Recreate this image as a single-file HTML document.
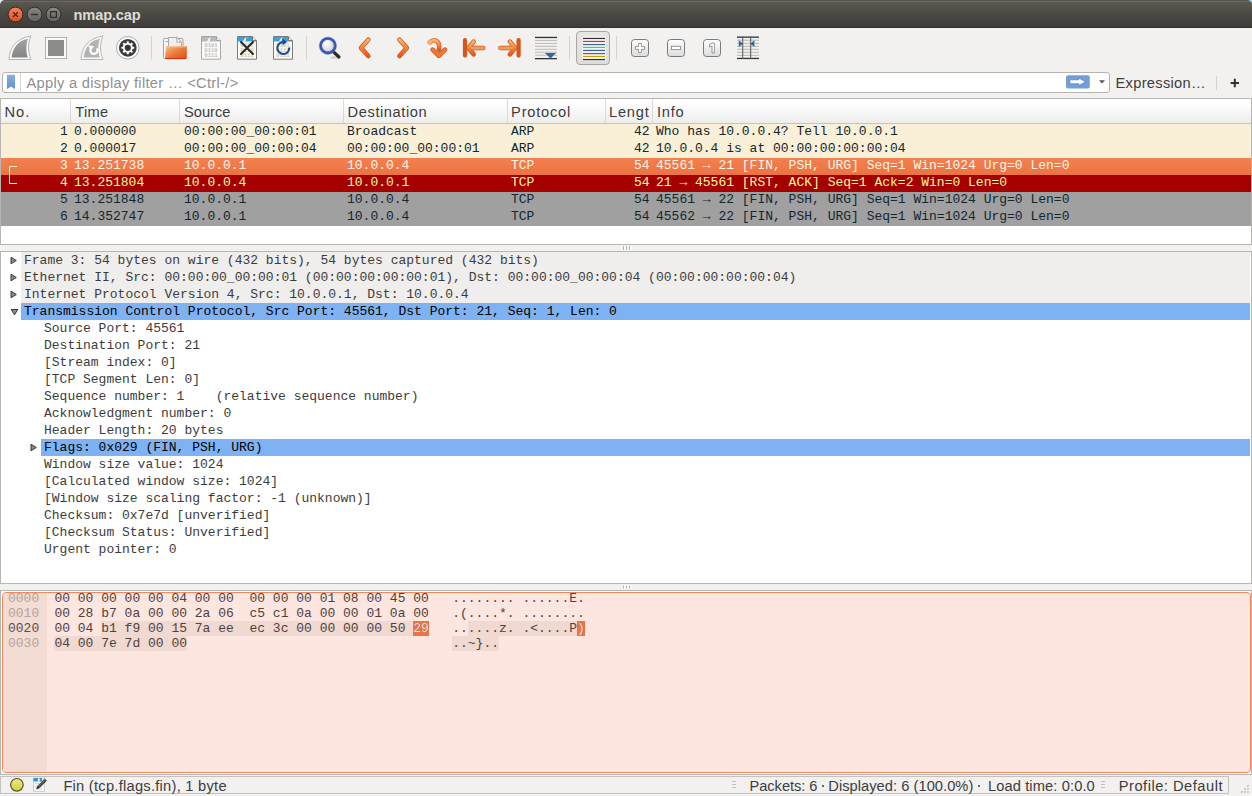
<!DOCTYPE html>
<html><head><meta charset="utf-8"><style>
*{box-sizing:border-box;margin:0;padding:0}
html,body{width:1252px;height:796px;overflow:hidden;background:#f2f1f0;font-family:"Liberation Sans",sans-serif;position:relative}
.abs{position:absolute}
.ui{position:absolute;font-family:"Liberation Sans",sans-serif;font-size:14.7px;color:#3c3c3c;white-space:pre;line-height:17px}
.m{font-family:"Liberation Mono",monospace;font-size:13px;white-space:pre;position:absolute;line-height:17px}
</style></head><body>
<div class="abs" style="left:0;top:0;width:6px;height:6px;background:linear-gradient(135deg,#e8f0f8 0,#e8f0f8 30%,#3a64a8 60%)"></div>
<div class="abs" style="left:1246px;top:0;width:6px;height:6px;background:linear-gradient(225deg,#b0d0f0 0,#90c0e8 30%,#e89030 60%)"></div>
<div class="abs" style="left:0;top:0;width:1252px;height:28px;border-radius:5px 5px 0 0;background:linear-gradient(#57554e 0px,#57554e 1px,#6a675e 1px,#6a675e 2px,#5a5750 2px,#4b4944 14px,#3d3c38 27px);border-bottom:1px solid #33322e"></div>
<div class="ui" style="left:73.60px;top:7px;font-size:14.6px;letter-spacing:-0.158px;font-weight:bold;color:#dfdbd2">nmap.cap</div>
<svg class="abs" style="left:0;top:0" width="70" height="28">
<defs>
<linearGradient id="gc" x1="0" y1="0" x2="0" y2="1"><stop offset="0" stop-color="#f5845a"/><stop offset="1" stop-color="#e14e1c"/></linearGradient>
<linearGradient id="gg" x1="0" y1="0" x2="0" y2="1"><stop offset="0" stop-color="#8a8884"/><stop offset="1" stop-color="#62605b"/></linearGradient>
</defs>
<circle cx="15.5" cy="14.5" r="7.4" fill="url(#gc)" stroke="#2f2d29" stroke-width="1"/>
<path d="M13.1 12.1 L17.9 16.9 M17.9 12.1 L13.1 16.9" stroke="#2b2520" stroke-width="1.3"/>
<circle cx="34.5" cy="14.5" r="7.4" fill="url(#gg)" stroke="#2f2d29" stroke-width="1"/>
<path d="M31 14.5 H38" stroke="#2e2d2a" stroke-width="1.4"/>
<circle cx="53.5" cy="14.5" r="7.4" fill="url(#gg)" stroke="#2f2d29" stroke-width="1"/>
<rect x="50.6" y="11.6" width="5.8" height="5.8" fill="none" stroke="#2e2d2a" stroke-width="1.2"/>
</svg>
<svg class="abs" style="left:0;top:28px" width="780" height="42" viewBox="0 28 780 42">
<defs>
<linearGradient id="fin" x1="0" y1="0" x2="0" y2="1"><stop offset="0" stop-color="#a3a3a3"/><stop offset="1" stop-color="#858585"/></linearGradient>
<linearGradient id="org" x1="0" y1="0" x2="0" y2="1"><stop offset="0" stop-color="#f5b56e"/><stop offset="1" stop-color="#e9571c"/></linearGradient>
<linearGradient id="fold" x1="0" y1="0" x2="1" y2="1"><stop offset="0" stop-color="#f6c38a"/><stop offset="0.5" stop-color="#ec7a3a"/><stop offset="1" stop-color="#e04a10"/></linearGradient>
<linearGradient id="btn" x1="0" y1="0" x2="0" y2="1"><stop offset="0" stop-color="#ffffff"/><stop offset="1" stop-color="#dcdcdc"/></linearGradient>
<linearGradient id="pbtn" x1="0" y1="0" x2="0" y2="1"><stop offset="0" stop-color="#e9e7e5"/><stop offset="1" stop-color="#dfdddb"/></linearGradient>
<radialGradient id="lens" cx="0.4" cy="0.35" r="0.7"><stop offset="0" stop-color="#ffffff"/><stop offset="1" stop-color="#c8c8c8"/></radialGradient>
</defs>
<!-- shark fin start -->
<path d="M9 59.5 C9.5 48 16 38 31 36 C28 42 27.5 51 31 59.5 Z" fill="#fafafa" stroke="#b4b4b4" stroke-width="1"/>
<path d="M11.6 57.6 C12.5 48 18 40.5 27.8 38.7 C26 44 25.8 52 27.8 57.6 Z" fill="url(#fin)"/>
<!-- stop -->
<rect x="45.5" y="37.5" width="21" height="21" fill="#fafafa" stroke="#b4b4b4" stroke-width="1"/>
<rect x="48" y="40" width="16" height="16" fill="#8c8c8a"/>
<!-- restart fin -->
<path d="M81 59.5 C81.5 48 88 38 103 36 C100 42 99.5 51 103 59.5 Z" fill="#fafafa" stroke="#b4b4b4" stroke-width="1"/>
<path d="M83.6 57.6 C84.5 48 90 40.5 99.8 38.7 C98 44 97.8 52 99.8 57.6 Z" fill="#b3b3b3"/>
<path d="M90.6 49 A3.6 3.6 0 1 0 96.9 48.3" fill="none" stroke="#fff" stroke-width="2.2"/>
<path d="M88 45.3 L94 46.2 L90.6 51 Z" fill="#fff"/>
<!-- gear -->
<circle cx="127.8" cy="47.8" r="11.3" fill="#fff" stroke="#a8a8a8" stroke-width="1"/>
<circle cx="127.8" cy="47.8" r="8.9" fill="#3c3c3c"/>
<path d="M126.79 42.90 L126.83 41.37 L128.77 41.37 L128.81 42.90 L130.55 43.62 L131.66 42.57 L133.03 43.94 L131.98 45.05 L132.70 46.79 L134.23 46.83 L134.23 48.77 L132.70 48.81 L131.98 50.55 L133.03 51.66 L131.66 53.03 L130.55 51.98 L128.81 52.70 L128.77 54.23 L126.83 54.23 L126.79 52.70 L125.05 51.98 L123.94 53.03 L122.57 51.66 L123.62 50.55 L122.90 48.81 L121.37 48.77 L121.37 46.83 L122.90 46.79 L123.62 45.05 L122.57 43.94 L123.94 42.57 L125.05 43.62 Z" fill="#fff"/>
<circle cx="127.8" cy="47.8" r="3.1" fill="#353535"/>
<!-- separators -->
<rect x="151" y="36" width="1" height="23.5" fill="#d5d3d0"/>
<rect x="306" y="36" width="1" height="23.5" fill="#d5d3d0"/>
<rect x="569" y="36" width="1" height="23.5" fill="#d5d3d0"/>
<rect x="616" y="36" width="1" height="23.5" fill="#d5d3d0"/>
<!-- open folder -->
<rect x="163.5" y="38.5" width="19.5" height="20" rx="1" fill="#f6f6f6" stroke="#a4a4a4" stroke-width="1"/>
<rect x="165.5" y="41" width="3" height="1" fill="#e8a040"/>
<path d="M168.5 58 V37.5 H176.8 L181.5 42.2 V58 Z" fill="#efefef" stroke="#a8a8a8" stroke-width="1"/>
<path d="M176.8 37.5 V42.2 H181.5 Z" fill="#ffffff" stroke="#a8a8a8" stroke-width="1" stroke-linejoin="round"/>
<path d="M166 46 H186.8 V58 Q186.8 59 185.8 59 H165 Z" fill="url(#fold)"/>
<path d="M166.6 46.8 H186" stroke="#f8d8b0" stroke-width="0.8"/>
<path d="M165 58.6 H186" stroke="#c83008" stroke-width="1"/>
<!-- document (save) -->
<path d="M201.5 59.2 V36.5 H216.5 L220.5 40.5 V59.2 Z" fill="#fbfbfb" stroke="#a6a6a6" stroke-width="1"/>
<path d="M202 37 H216.3 L220 40.7 V41.5 H202 Z" fill="#b8b8b8"/>
<path d="M207 41.5 Q208 38 210.5 37 L209.5 41.5 Z" fill="#fbfbfb"/>
<path d="M216.5 36.5 V40.5 H220.5" fill="#eee" stroke="#a6a6a6" stroke-width="1"/>
<g opacity="0.99"><text x="211" y="47" font-family="Liberation Mono" font-size="5.6" font-weight="bold" fill="#bdbdbd" text-anchor="middle">0101</text>
<text x="211" y="52" font-family="Liberation Mono" font-size="5.6" font-weight="bold" fill="#bdbdbd" text-anchor="middle">0110</text>
<text x="211" y="57" font-family="Liberation Mono" font-size="5.6" font-weight="bold" fill="#bdbdbd" text-anchor="middle">0111</text></g>
<!-- close file -->
<path d="M237.5 59.2 V36.5 H252.5 L256.5 40.5 V59.2 Z" fill="#fbfbef" stroke="#7a7a7a" stroke-width="1"/>
<path d="M238 37 H252.3 L256 40.7 V41.5 H238 Z" fill="#3aa0e2"/>
<path d="M243 41.5 Q244 38 246.5 37 L245.5 41.5 Z" fill="#fbfbef"/>
<path d="M252.5 36.5 V40.5 H256.5" fill="#f2f2f2" stroke="#7a7a7a" stroke-width="1"/>
<text x="247" y="57" font-family="Liberation Mono" font-size="5.6" font-weight="bold" fill="#c8c8b8" text-anchor="middle">0111</text>
<text x="247" y="47" font-family="Liberation Mono" font-size="5.6" font-weight="bold" fill="#c8c8b8" text-anchor="middle">0101</text>
<text x="247" y="52" font-family="Liberation Mono" font-size="5.6" font-weight="bold" fill="#c8c8b8" text-anchor="middle">0110</text>
<path d="M241 42 L253 54 M253 42 L241 54" stroke="#2a2a2a" stroke-width="2.1" stroke-linecap="round"/>
<!-- reload -->
<path d="M273.5 59.2 V36.5 H288.5 L292.5 40.5 V59.2 Z" fill="#fbfbef" stroke="#7a7a7a" stroke-width="1"/>
<path d="M274 37 H288.3 L292 40.7 V41.5 H274 Z" fill="#3aa0e2"/>
<path d="M279 41.5 Q280 38 282.5 37 L281.5 41.5 Z" fill="#fbfbef"/>
<path d="M288.5 36.5 V40.5 H292.5" fill="#f2f2f2" stroke="#7a7a7a" stroke-width="1"/>
<text x="283" y="57" font-family="Liberation Mono" font-size="5.6" font-weight="bold" fill="#c8c8b8" text-anchor="middle">0111</text>
<text x="283" y="47" font-family="Liberation Mono" font-size="5.6" font-weight="bold" fill="#c8c8b8" text-anchor="middle">0101</text>
<text x="283" y="52" font-family="Liberation Mono" font-size="5.6" font-weight="bold" fill="#c8c8b8" text-anchor="middle">0110</text>
<path d="M285.2 42.3 A6 6 0 1 0 289.3 47.5" fill="none" stroke="#1e4a98" stroke-width="2.1"/>
<path d="M282.5 38.8 L287.2 42.1 L282.5 45.2 Z" fill="#1e4a98"/>
<!-- search -->
<ellipse cx="335" cy="57.5" rx="5" ry="1.6" fill="#000" opacity="0.12"/>
<path d="M333.5 51.8 L339 57" stroke="#2a2a2a" stroke-width="3.2" stroke-linecap="round"/>
<circle cx="327.9" cy="45.7" r="7.3" fill="url(#lens)" stroke="#3d56b0" stroke-width="2.8"/>
<circle cx="327.9" cy="45.7" r="8.8" fill="none" stroke="#6a7fcc" stroke-width="0.5" opacity="0.6"/>
<!-- prev / next -->
<path d="M368.3 39.8 L361 47.9 L368.3 56" fill="none" stroke="#d8561a" stroke-width="4.6" stroke-linecap="round" stroke-linejoin="round"/>
<path d="M368.3 39.8 L361 47.9 L368.3 56" fill="none" stroke="url(#org)" stroke-width="3" stroke-linecap="round" stroke-linejoin="round"/>
<path d="M399.5 39.8 L406.8 47.9 L399.5 56" fill="none" stroke="#d8561a" stroke-width="4.6" stroke-linecap="round" stroke-linejoin="round"/>
<path d="M399.5 39.8 L406.8 47.9 L399.5 56" fill="none" stroke="url(#org)" stroke-width="3" stroke-linecap="round" stroke-linejoin="round"/>
<!-- jump -->
<g fill="none" stroke-linecap="round" stroke-linejoin="round">
<path d="M429.8 42.3 C434 38.5 440.5 40 439 49.8" stroke="#d8601e" stroke-width="4.6"/>
<path d="M432.6 49.6 L438.8 55.8 L445 49.6" stroke="#d8561a" stroke-width="4.6"/>
<path d="M429.8 42.3 C434 38.5 440.5 40 439 49.8" stroke="url(#org)" stroke-width="3"/>
<path d="M432.6 49.6 L438.8 55.8 L445 49.6" stroke="#ec7a3c" stroke-width="3"/>
</g>
<circle cx="429.5" cy="42.5" r="2.2" fill="#f3b27a"/>
<!-- first -->
<g fill="none" stroke-linecap="round" stroke-linejoin="round">
<path d="M465 40.2 V55.6" stroke="#d8561a" stroke-width="4.2"/>
<path d="M469 48 H483.2" stroke="#d8561a" stroke-width="4.6"/>
<path d="M473.6 41.6 L468.6 48 L473.6 54.4" stroke="#d8561a" stroke-width="4.6"/>
<path d="M465 40.2 V55.6" stroke="url(#org)" stroke-width="2.6"/>
<path d="M469 48 H483.2" stroke="#f0a060" stroke-width="3"/>
<path d="M473.6 41.6 L468.6 48 L473.6 54.4" stroke="url(#org)" stroke-width="3"/>
</g>
<!-- last -->
<g fill="none" stroke-linecap="round" stroke-linejoin="round">
<path d="M518.6 40.2 V55.6" stroke="#d8561a" stroke-width="4.2"/>
<path d="M500.4 48 H514.6" stroke="#d8561a" stroke-width="4.6"/>
<path d="M510 41.6 L515 48 L510 54.4" stroke="#d8561a" stroke-width="4.6"/>
<path d="M518.6 40.2 V55.6" stroke="url(#org)" stroke-width="2.6"/>
<path d="M500.4 48 H514.6" stroke="#f0a060" stroke-width="3"/>
<path d="M510 41.6 L515 48 L510 54.4" stroke="url(#org)" stroke-width="3"/>
</g>
<!-- autoscroll -->
<rect x="535" y="36.8" width="22" height="1.3" fill="#2e3436"/>
<rect x="535" y="39.9" width="22" height="1" fill="#b8bab2"/>
<rect x="535" y="42.9" width="22" height="1" fill="#b8bab2"/>
<rect x="535" y="45.8" width="22" height="1" fill="#b8bab2"/>
<rect x="535" y="48.8" width="22" height="1" fill="#b8bab2"/>
<rect x="535" y="51.7" width="22" height="1" fill="#b8bab2"/>
<rect x="535" y="54.6" width="22" height="1" fill="#b8bab2"/>
<rect x="535" y="58" width="22" height="1.3" fill="#2e3436"/>
<path d="M545 53 H556 L550.5 58.5 Z" fill="#3465a4"/>
<!-- colorize pressed -->
<rect x="576.5" y="31.5" width="33" height="33" rx="3.5" fill="url(#pbtn)" stroke="#aaa7a2" stroke-width="1"/>
<rect x="582.5" y="36.5" width="23" height="24" fill="#ffffff"/>
<rect x="583" y="37.8" width="22" height="1.3" fill="#2e3436"/>
<rect x="583" y="40.8" width="22" height="1.3" fill="#e02a2a"/>
<rect x="583" y="43.9" width="22" height="1.3" fill="#3465a4"/>
<rect x="583" y="46.8" width="22" height="1.3" fill="#6ac524"/>
<rect x="583" y="49.8" width="22" height="1.3" fill="#3465a4"/>
<rect x="583" y="52.9" width="22" height="1.3" fill="#75507b"/>
<rect x="583" y="55.8" width="22" height="1.3" fill="#c4a000"/>
<rect x="583" y="58.9" width="22" height="1.3" fill="#2e3436"/>
<!-- zoom buttons -->
<rect x="631.5" y="39.5" width="17" height="17" rx="3" fill="url(#btn)" stroke="#7a7a7a" stroke-width="1"/>
<path d="M638.6 43.3 H641.4 V46.6 H644.7 V49.4 H641.4 V52.7 H638.6 V49.4 H635.3 V46.6 H638.6 Z" fill="#fff" stroke="#8a8a8a" stroke-width="0.9"/>
<rect x="667.5" y="39.5" width="17" height="17" rx="3" fill="url(#btn)" stroke="#7a7a7a" stroke-width="1"/>
<rect x="671.5" y="46.3" width="9" height="3.3" fill="#fff" stroke="#8a8a8a" stroke-width="0.9"/>
<rect x="703.5" y="39.5" width="17" height="17" rx="3" fill="url(#btn)" stroke="#7a7a7a" stroke-width="1"/>
<path d="M709.5 44.5 L712.5 43 H714.3 V53 H712 V46 L709.5 47 Z" fill="#fff" stroke="#8a8a8a" stroke-width="0.9"/>
<!-- resize columns -->
<rect x="737" y="36.5" width="22" height="1.3" fill="#2e3436"/>
<rect x="737" y="39.7" width="22" height="1" fill="#b8bab2"/>
<rect x="737" y="42.8" width="22" height="1" fill="#b8bab2"/>
<rect x="737" y="45.8" width="22" height="1" fill="#b8bab2"/>
<rect x="737" y="48.8" width="22" height="1" fill="#b8bab2"/>
<rect x="737" y="51.8" width="22" height="1" fill="#b8bab2"/>
<rect x="737" y="54.8" width="22" height="1" fill="#b8bab2"/>
<rect x="737" y="57.8" width="22" height="1.3" fill="#2e3436"/>
<rect x="742.2" y="36.5" width="1" height="22.5" fill="#555753"/>
<rect x="750.2" y="36.5" width="1" height="22.5" fill="#555753"/>
<path d="M738.8 40.3 L743 43.7 L738.8 47.1 Z" fill="#3465a4"/>
<path d="M754.4 40.3 L750.2 43.7 L754.4 47.1 Z" fill="#3465a4"/>
</svg>
<div class="abs" style="left:2px;top:72px;width:1108px;height:21px;background:#fff;border:1px solid #b6b4b1;border-radius:3px"></div>
<div class="abs" style="left:20px;top:73px;width:1px;height:19px;background:#d8d6d3"></div>
<svg class="abs" style="left:0;top:66px" width="24" height="30" viewBox="0 66 24 30"><defs><linearGradient id="bm" x1="0" y1="0" x2="0" y2="1"><stop offset="0" stop-color="#86b2e2"/><stop offset="1" stop-color="#5b8fd0"/></linearGradient></defs><path d="M7 74.8 H15 V89 L11 86.6 L7 89 Z" fill="url(#bm)"/></svg>
<div class="ui" style="left:26.40px;top:75px;font-size:14.67px;letter-spacing:0.308px;color:#8f8f8f">Apply a display filter … &lt;Ctrl-/&gt;</div>
<svg class="abs" style="left:1060px;top:70px" width="60" height="26" viewBox="1060 70 60 26">
<rect x="1066" y="75.2" width="23.8" height="13.4" rx="2" fill="#729fd8"/>
<path d="M1069.8 79.8 H1078.8 V78 L1085.6 81.8 L1078.8 85.6 V83.8 H1069.8 Z" fill="#fff" stroke="#4f7fbf" stroke-width="0.7" stroke-linejoin="round"/>
<path d="M1099 80.2 H1105 L1102 83.6 Z" fill="#555"/>
</svg>
<div class="ui" style="left:1115.50px;top:75px;font-size:14.67px;letter-spacing:0.300px;">Expression…</div>
<div class="abs" style="left:1216px;top:76px;width:1px;height:14px;background:#d5d3d0"></div>
<svg class="abs" style="left:1228px;top:76px" width="14" height="14" viewBox="1228 76 14 14"><path d="M1230.6 83 H1239 M1234.8 78.8 V87.2" stroke="#2f2f2f" stroke-width="2"/></svg>
<div class="abs" style="left:0;top:98px;width:1252px;height:147px;background:#fff;border:1px solid #b8b6b3"></div>
<div class="abs" style="left:1px;top:99px;width:1250px;height:25px;background:linear-gradient(#ffffff,#fafafa 40%,#eeedec);border-bottom:1px solid #c6c4c1"></div>
<div class="abs" style="left:70px;top:99px;width:1px;height:24px;background:#dcdad7"></div>
<div class="abs" style="left:179px;top:99px;width:1px;height:24px;background:#dcdad7"></div>
<div class="abs" style="left:343px;top:99px;width:1px;height:24px;background:#dcdad7"></div>
<div class="abs" style="left:507px;top:99px;width:1px;height:24px;background:#dcdad7"></div>
<div class="abs" style="left:605px;top:99px;width:1px;height:24px;background:#dcdad7"></div>
<div class="abs" style="left:652px;top:99px;width:1px;height:24px;background:#dcdad7"></div>
<div class="ui" style="left:4.56px;top:104px;font-size:14.67px;letter-spacing:0.982px;">No.</div>
<div class="ui" style="left:75.30px;top:104px;font-size:14.67px;letter-spacing:0.242px;">Time</div>
<div class="ui" style="left:184.10px;top:104px;font-size:14.67px;letter-spacing:-0.037px;">Source</div>
<div class="ui" style="left:347.60px;top:104px;font-size:14.67px;letter-spacing:0.573px;">Destination</div>
<div class="ui" style="left:511.10px;top:104px;font-size:14.67px;letter-spacing:0.770px;">Protocol</div>
<div class="ui" style="left:609.00px;top:104px;font-size:14.67px;letter-spacing:0.774px;">Lengt</div>
<div class="ui" style="left:656.90px;top:104px;font-size:14.67px;letter-spacing:0.768px;">Info</div>
<div class="abs" style="left:1px;top:124px;width:1250px;height:17px;background:#faf0d7"></div>
<div class="m" style="left:60px;top:123px;color:#12272e">1</div>
<div class="m" style="left:74px;top:123px;color:#12272e">0.000000</div>
<div class="m" style="left:184px;top:123px;color:#12272e">00:00:00_00:00:01</div>
<div class="m" style="left:347px;top:123px;color:#12272e">Broadcast</div>
<div class="m" style="left:511px;top:123px;color:#12272e">ARP</div>
<div class="m" style="left:634px;top:123px;color:#12272e">42</div>
<div class="m" style="left:656px;top:123px;color:#12272e">Who has 10.0.0.4? Tell 10.0.0.1</div>
<div class="abs" style="left:1px;top:141px;width:1250px;height:17px;background:#faf0d7"></div>
<div class="m" style="left:60px;top:140px;color:#12272e">2</div>
<div class="m" style="left:74px;top:140px;color:#12272e">0.000017</div>
<div class="m" style="left:184px;top:140px;color:#12272e">00:00:00_00:00:04</div>
<div class="m" style="left:347px;top:140px;color:#12272e">00:00:00_00:00:01</div>
<div class="m" style="left:511px;top:140px;color:#12272e">ARP</div>
<div class="m" style="left:634px;top:140px;color:#12272e">42</div>
<div class="m" style="left:656px;top:140px;color:#12272e">10.0.0.4 is at 00:00:00:00:00:04</div>
<div class="abs" style="left:1px;top:158px;width:1250px;height:17px;background:linear-gradient(#f3804f,#ec7341)"></div>
<div class="m" style="left:60px;top:157px;color:#fff6ea">3</div>
<div class="m" style="left:74px;top:157px;color:#fff6ea">13.251738</div>
<div class="m" style="left:184px;top:157px;color:#fff6ea">10.0.0.1</div>
<div class="m" style="left:347px;top:157px;color:#fff6ea">10.0.0.4</div>
<div class="m" style="left:511px;top:157px;color:#fff6ea">TCP</div>
<div class="m" style="left:634px;top:157px;color:#fff6ea">54</div>
<div class="m" style="left:656px;top:157px;color:#fff6ea">45561 → 21 [FIN, PSH, URG] Seq=1 Win=1024 Urg=0 Len=0</div>
<div class="abs" style="left:1px;top:175px;width:1250px;height:17px;background:#a40000"></div>
<div class="m" style="left:60px;top:174px;color:#fffc9c">4</div>
<div class="m" style="left:74px;top:174px;color:#fffc9c">13.251804</div>
<div class="m" style="left:184px;top:174px;color:#fffc9c">10.0.0.4</div>
<div class="m" style="left:347px;top:174px;color:#fffc9c">10.0.0.1</div>
<div class="m" style="left:511px;top:174px;color:#fffc9c">TCP</div>
<div class="m" style="left:634px;top:174px;color:#fffc9c">54</div>
<div class="m" style="left:656px;top:174px;color:#fffc9c">21 → 45561 [RST, ACK] Seq=1 Ack=2 Win=0 Len=0</div>
<div class="abs" style="left:1px;top:192px;width:1250px;height:17px;background:#a0a0a0"></div>
<div class="m" style="left:60px;top:191px;color:#12272e">5</div>
<div class="m" style="left:74px;top:191px;color:#12272e">13.251848</div>
<div class="m" style="left:184px;top:191px;color:#12272e">10.0.0.1</div>
<div class="m" style="left:347px;top:191px;color:#12272e">10.0.0.4</div>
<div class="m" style="left:511px;top:191px;color:#12272e">TCP</div>
<div class="m" style="left:634px;top:191px;color:#12272e">54</div>
<div class="m" style="left:656px;top:191px;color:#12272e">45561 → 22 [FIN, PSH, URG] Seq=1 Win=1024 Urg=0 Len=0</div>
<div class="abs" style="left:1px;top:209px;width:1250px;height:17px;background:#a0a0a0"></div>
<div class="m" style="left:60px;top:208px;color:#12272e">6</div>
<div class="m" style="left:74px;top:208px;color:#12272e">14.352747</div>
<div class="m" style="left:184px;top:208px;color:#12272e">10.0.0.1</div>
<div class="m" style="left:347px;top:208px;color:#12272e">10.0.0.4</div>
<div class="m" style="left:511px;top:208px;color:#12272e">TCP</div>
<div class="m" style="left:634px;top:208px;color:#12272e">54</div>
<div class="m" style="left:656px;top:208px;color:#12272e">45562 → 22 [FIN, PSH, URG] Seq=1 Win=1024 Urg=0 Len=0</div>
<svg class="abs" style="left:0;top:160px" width="24" height="30" viewBox="0 160 24 30"><path d="M17 166.5 H9.5 V183.5 H17" fill="none" stroke="#fff6d8" stroke-width="1"/></svg>
<svg class="abs" style="left:620px;top:244px" width="14" height="8" viewBox="620 244 14 8"><rect x="622.5" y="245.5" width="9" height="5" fill="#fafafa"/><rect x="623" y="246" width="1" height="4" fill="#b3b1ae"/><rect x="626" y="246" width="1" height="4" fill="#b3b1ae"/><rect x="629" y="246" width="1" height="4" fill="#b3b1ae"/></svg>
<div class="abs" style="left:0;top:251px;width:1252px;height:333px;background:#fff;border:1px solid #b8b6b3"></div>
<div class="abs" style="left:21px;top:252px;width:1229px;height:17px;background:#efeeed"></div>
<div class="m" style="left:24px;top:252px;color:#3c3c3c">Frame 3: 54 bytes on wire (432 bits), 54 bytes captured (432 bits)</div>
<svg class="abs" style="left:10px;top:256px" width="8" height="9"><path d="M1 1.2 L6.3 4.5 L1 7.8Z" fill="#8a8a8a" stroke="#383838" stroke-width="1" stroke-linejoin="round"/></svg>
<div class="abs" style="left:21px;top:269px;width:1229px;height:17px;background:#efeeed"></div>
<div class="m" style="left:24px;top:269px;color:#3c3c3c">Ethernet II, Src: 00:00:00_00:00:01 (00:00:00:00:00:01), Dst: 00:00:00_00:00:04 (00:00:00:00:00:04)</div>
<svg class="abs" style="left:10px;top:273px" width="8" height="9"><path d="M1 1.2 L6.3 4.5 L1 7.8Z" fill="#8a8a8a" stroke="#383838" stroke-width="1" stroke-linejoin="round"/></svg>
<div class="abs" style="left:21px;top:286px;width:1229px;height:17px;background:#efeeed"></div>
<div class="m" style="left:24px;top:286px;color:#3c3c3c">Internet Protocol Version 4, Src: 10.0.0.1, Dst: 10.0.0.4</div>
<svg class="abs" style="left:10px;top:290px" width="8" height="9"><path d="M1 1.2 L6.3 4.5 L1 7.8Z" fill="#8a8a8a" stroke="#383838" stroke-width="1" stroke-linejoin="round"/></svg>
<div class="abs" style="left:21px;top:303px;width:1229px;height:17px;background:#7fb2f2"></div>
<div class="m" style="left:24px;top:303px;color:#000">Transmission Control Protocol, Src Port: 45561, Dst Port: 21, Seq: 1, Len: 0</div>
<svg class="abs" style="left:9.5px;top:307.5px" width="9" height="8"><path d="M1.2 1.5 L7.8 1.5 L4.5 6.8Z" fill="#8a8a8a" stroke="#383838" stroke-width="1" stroke-linejoin="round"/></svg>
<div class="m" style="left:44px;top:320px;color:#3c3c3c">Source Port: 45561</div>
<div class="m" style="left:44px;top:337px;color:#3c3c3c">Destination Port: 21</div>
<div class="m" style="left:44px;top:354px;color:#3c3c3c">[Stream index: 0]</div>
<div class="m" style="left:44px;top:371px;color:#3c3c3c">[TCP Segment Len: 0]</div>
<div class="m" style="left:44px;top:388px;color:#3c3c3c">Sequence number: 1    (relative sequence number)</div>
<div class="m" style="left:44px;top:405px;color:#3c3c3c">Acknowledgment number: 0</div>
<div class="m" style="left:44px;top:422px;color:#3c3c3c">Header Length: 20 bytes</div>
<div class="abs" style="left:41px;top:439px;width:1209px;height:17px;background:#7fb2f2"></div>
<div class="m" style="left:44px;top:439px;color:#000">Flags: 0x029 (FIN, PSH, URG)</div>
<svg class="abs" style="left:30px;top:443px" width="8" height="9"><path d="M1 1.2 L6.3 4.5 L1 7.8Z" fill="#8a8a8a" stroke="#383838" stroke-width="1" stroke-linejoin="round"/></svg>
<div class="m" style="left:44px;top:456px;color:#3c3c3c">Window size value: 1024</div>
<div class="m" style="left:44px;top:473px;color:#3c3c3c">[Calculated window size: 1024]</div>
<div class="m" style="left:44px;top:490px;color:#3c3c3c">[Window size scaling factor: -1 (unknown)]</div>
<div class="m" style="left:44px;top:507px;color:#3c3c3c">Checksum: 0x7e7d [unverified]</div>
<div class="m" style="left:44px;top:524px;color:#3c3c3c">[Checksum Status: Unverified]</div>
<div class="m" style="left:44px;top:541px;color:#3c3c3c">Urgent pointer: 0</div>
<svg class="abs" style="left:620px;top:584px" width="14" height="6" viewBox="620 584 14 6"><rect x="622.5" y="585" width="9" height="4" fill="#fafafa"/><rect x="623" y="585.5" width="1" height="3" fill="#b3b1ae"/><rect x="626" y="585.5" width="1" height="3" fill="#b3b1ae"/><rect x="629" y="585.5" width="1" height="3" fill="#b3b1ae"/></svg>
<div class="abs" style="left:0;top:590px;width:1252px;height:185px;background:#fff;border:1px solid #b8b6b3"></div>
<div class="abs" style="left:2px;top:592px;width:1249px;height:181px;background:#fde6df;border:1px solid #ef8a60;border-radius:4px;overflow:hidden"><div class="abs" style="left:0;top:0;width:44px;height:181px;background:#f2dcd3"></div></div>
<div class="abs" style="left:101.2px;top:621px;width:312.0px;height:15px;background:#f0d9d0"></div>
<div class="abs" style="left:413.2px;top:621px;width:15.6px;height:15px;background:#ee7343"></div>
<div class="abs" style="left:467.8px;top:621px;width:109.2px;height:15px;background:#f0d9d0"></div>
<div class="abs" style="left:577.0px;top:621px;width:7.8px;height:15px;background:#ee7343"></div>
<div class="abs" style="left:54.4px;top:636px;width:132.6px;height:15px;background:#f0d9d0"></div>
<div class="abs" style="left:452.2px;top:636px;width:46.8px;height:15px;background:#f0d9d0"></div>
<div class="m" style="left:8px;top:590px;color:#b9a29b">0000</div>
<div class="m" style="left:54.4px;top:590px;color:#4f413c">00 00 00 00 00 04 00 00  00 00 00 01 08 00 45 00</div>
<div class="m" style="left:452.2px;top:590px;color:#4f413c">........ ......E.</div>
<div class="m" style="left:8px;top:605px;color:#b9a29b">0010</div>
<div class="m" style="left:54.4px;top:605px;color:#4f413c">00 28 b7 0a 00 00 2a 06  c5 c1 0a 00 00 01 0a 00</div>
<div class="m" style="left:452.2px;top:605px;color:#4f413c">.(....*. ........</div>
<div class="m" style="left:8px;top:620px;color:#5d4b45">0020</div>
<div class="m" style="left:54.4px;top:620px;color:#4f413c">00 04 b1 f9 00 15 7a ee  ec 3c 00 00 00 00 50 29</div>
<div class="m" style="left:452.2px;top:620px;color:#4f413c">......z. .&lt;....P)</div>
<div class="m" style="left:8px;top:635px;color:#b9a29b">0030</div>
<div class="m" style="left:54.4px;top:635px;color:#4f413c">04 00 7e 7d 00 00</div>
<div class="m" style="left:452.2px;top:635px;color:#4f413c">..~}..</div>
<div class="m" style="left:413.2px;top:620px;color:#fde6df">29</div>
<div class="m" style="left:577.0px;top:620px;color:#fde6df">)</div>
<div class="abs" style="left:0;top:776px;width:1229px;height:18px;background:#f2f1f0;border:1px solid #c4c2bf;border-right:1px solid #c4c2bf"></div>
<svg class="abs" style="left:0;top:774px" width="60" height="22" viewBox="0 774 60 22">
<defs><linearGradient id="yel" x1="0" y1="0" x2="0" y2="1"><stop offset="0" stop-color="#e8e88a"/><stop offset="1" stop-color="#d4d042"/></linearGradient></defs>
<circle cx="16.9" cy="784.8" r="6.3" fill="url(#yel)" stroke="#56542a" stroke-width="1.2"/>
<rect x="33.5" y="778" width="11" height="13.5" fill="#f6f6f6" stroke="#c8c8c8" stroke-width="0.8"/>
<rect x="33.5" y="778" width="8.5" height="3.5" fill="#2e95d8"/>
<path d="M35.5 783.5 H39 M35.5 786.2 H38 M35.5 789 H42" stroke="#d0d0d0" stroke-width="0.9"/>
<path d="M37.8 778.3 Q38.5 780 37.2 781.6 L39.5 781.6 Q40.5 779.5 39.5 778.3 Z" fill="#e8f2fa"/>
<path d="M37.4 785.9 L44.7 778.6 L46.9 780.8 L39.6 788.1 Z" fill="#444"/>
<path d="M38.6 786.3 L45.3 779.6" stroke="#9a9a9a" stroke-width="0.6"/>
<path d="M37.4 785.9 L39.6 788.1 L36.2 789.3 Z" fill="#111"/>
</svg>
<div class="ui" style="left:63.40px;top:778px;font-size:14.67px;letter-spacing:0.260px;">Fin (tcp.flags.fin), 1 byte</div>
<div class="ui" style="left:749.60px;top:778px;font-size:14.67px;letter-spacing:-0.075px;">Packets: 6</div>
<div class="abs" style="left:821.5px;top:785px;width:2px;height:2px;background:#3c3c3c;border-radius:1px"></div>
<div class="ui" style="left:828.30px;top:778px;font-size:14.67px;letter-spacing:0.039px;">Displayed: 6 (100.0%)</div>
<div class="abs" style="left:978.2px;top:785px;width:2px;height:2px;background:#3c3c3c;border-radius:1px"></div>
<div class="ui" style="left:987.90px;top:778px;font-size:14.67px;letter-spacing:0.116px;">Load time: 0:0.0</div>
<div class="ui" style="left:1118.80px;top:778px;font-size:14.67px;letter-spacing:0.503px;">Profile: Default</div>
<svg class="abs" style="left:728px;top:776px" width="380" height="20" viewBox="728 776 380 20"><path d="M732 781.5 H736 M732 784.5 H736 M732 787.5 H736 M1101 781.5 H1105 M1101 784.5 H1105 M1101 787.5 H1105" stroke="#c2c0bd" stroke-width="1"/></svg>
<svg class="abs" style="left:1236px;top:782px" width="16" height="14" viewBox="1236 782 16 14"><g fill="#cfcdca"><rect x="1247" y="785" width="2" height="2"/><rect x="1244" y="788" width="2" height="2"/><rect x="1247" y="788" width="2" height="2"/><rect x="1241" y="791" width="2" height="2"/><rect x="1244" y="791" width="2" height="2"/><rect x="1247" y="791" width="2" height="2"/></g></svg>
</body></html>
